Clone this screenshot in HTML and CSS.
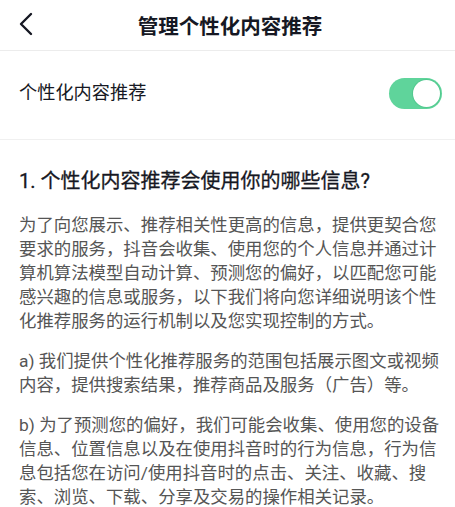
FILE: index.html
```html
<!DOCTYPE html>
<html lang="zh-CN">
<head>
    <meta charset="UTF-8">
    <meta name="viewport" content="width=device-width, initial-scale=1.0">
    <title>管理个性化内容推荐</title>
    <link rel="stylesheet" href="styles.css">
</head>
<body>
    <div class="page">
        <div class="nav-bar">
            <span class="back-btn">
                <svg width="16" height="24" viewBox="0 0 16 24">
                    <polyline points="13,2 3,12 13,22" fill="none" stroke="#161823" stroke-width="2.4" stroke-linecap="round" stroke-linejoin="round"></polyline>
                </svg>
            </span>
            <p class="nav-title">管理个性化内容推荐</p>
        </div>

        <div class="setting-row">
            <p class="setting-label">个性化内容推荐</p>
            <span class="switch on"><span class="switch-knob"></span></span>
        </div>

        <div class="content">
            <p class="section-title">1. 个性化内容推荐会使用你的哪些信息?</p>
            <p class="text">为了向您展示、推荐相关性更高的信息，提供更契合您要求的服务，抖音会收集、使用您的个人信息并通过计算机算法模型自动计算、预测您的偏好，以匹配您可能感兴趣的信息或服务，以下我们将向您详细说明该个性化推荐服务的运行机制以及您实现控制的方式。</p>
            <p class="text">a) 我们提供个性化推荐服务的范围包括展示图文或视频内容，提供搜索结果，推荐商品及服务（广告）等。</p>
            <p class="text">b) 为了预测您的偏好，我们可能会收集、使用您的设备信息、位置信息以及在使用抖音时的行为信息，行为信息包括您在访问/使用抖音时的点击、关注、收藏、搜索、浏览、下载、分享及交易的操作相关记录。</p>
        </div>
    </div>
</body>
</html>
```

FILE: styles.css
```css
body {
    margin: 0;
    padding: 0;
    background: #ffffff;
    font-family: Roboto, "Noto Sans CJK SC", sans-serif;
    color: #161823;
}

p {
    margin: 0;
}

.page {
    width: 455px;
}

.nav-bar {
    height: 50px;
    display: flex;
    align-items: center;
    justify-content: center;
    position: relative;
    border-bottom: 1px solid #ececec;
}

.back-btn {
    position: absolute;
    left: 18px;
    top: 12px;
    display: flex;
}

.nav-title {
    font-size: 20.5px;
    font-weight: bold;
    padding-left: 5px;
}

.setting-row {
    height: 88px;
    display: flex;
    align-items: center;
    justify-content: space-between;
    padding: 0 13px 0 19px;
    border-bottom: 1px solid #f0f0f0;
}

.setting-label {
    font-size: 18.2px;
    margin-top: -8px;
}

.switch {
    width: 53px;
    height: 31px;
    border-radius: 16px;
    background: #e5e5e5;
    display: flex;
    align-items: center;
    padding: 0 2px;
    box-sizing: border-box;
    margin-top: -3px;
}

.switch.on {
    background: #5fd49b;
    justify-content: flex-end;
}

.switch-knob {
    width: 27px;
    height: 27px;
    border-radius: 50%;
    background: #fff;
    box-shadow: 0 0 0 1px rgba(60, 180, 120, 0.35);
}

.content {
    padding: 25px 15px 0 19px;
}

.section-title {
    font-size: 20px;
    line-height: 32px;
    -webkit-text-stroke: 0.3px #161823;
    margin-bottom: 16px;
}

.text {
    font-size: 17.4px;
    line-height: 24px;
    color: #555555;
    margin-bottom: 16px;
}
```
